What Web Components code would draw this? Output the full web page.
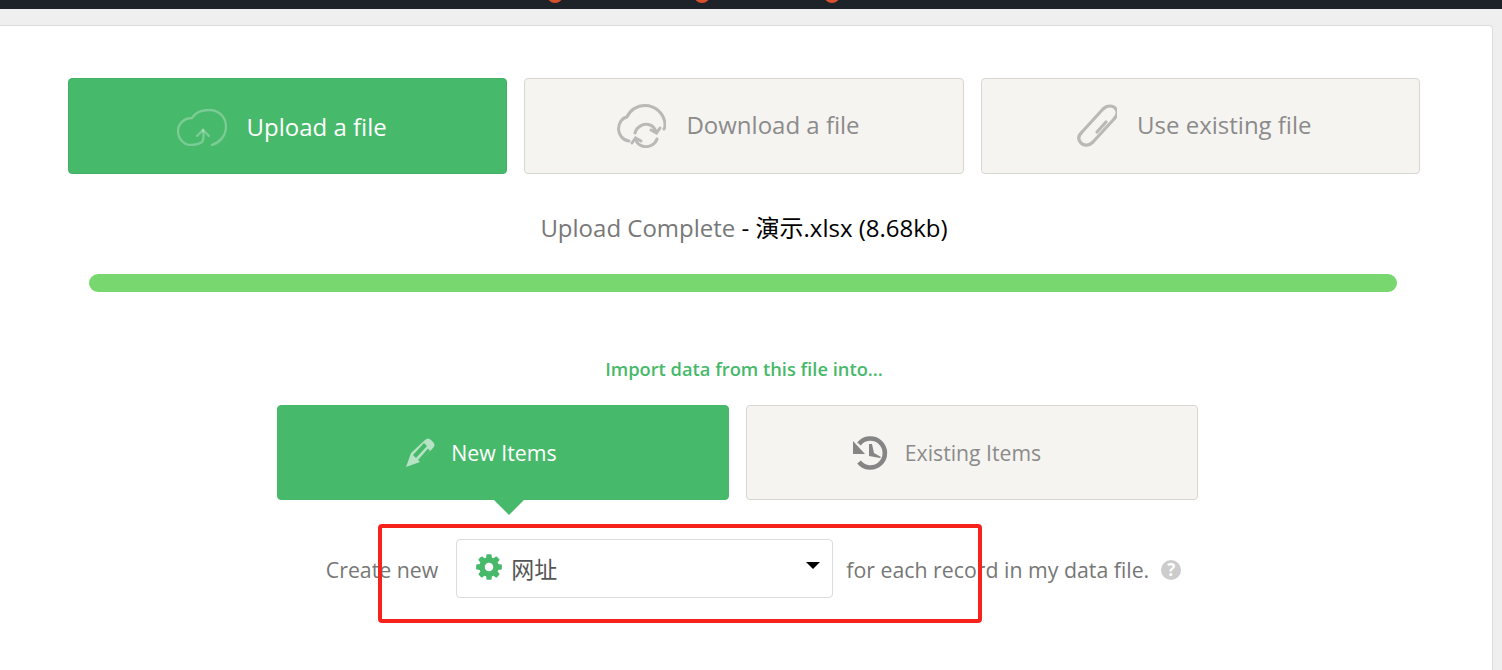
<!DOCTYPE html>
<html>
<head>
<meta charset="utf-8">
<style>
html, body { margin: 0; height: 100%; overflow: hidden; }
body { background: #efefef; font-family: "Open Sans", "Noto Sans CJK SC", sans-serif; }
</style>
</head>
<body>
<top-bar></top-bar>
<import-card>
  <div slot="tabs">
    <source-tab active label="Upload a file"><svg slot="icon" width="50" height="37" viewBox="0 0 50 37" fill="none" stroke="#fff" stroke-opacity=".28" stroke-width="2.4" stroke-linecap="round"><path d="M35 36C42 34 49 27 49 18C49 8 42 1 32 1C24 1 18 4 15 9C7 9 1 15 1 22C1 30 7 36 14 36C18 36 22 35 25 33C27 31 27 28 26 21"/><path d="M20 27L26 21L32 27"/></svg></source-tab>
    <source-tab label="Download a file"><svg slot="icon" width="50" height="44" viewBox="-1 0 50 44" fill="none" stroke="#b9b9b7" stroke-width="3" stroke-linecap="round"><path d="M12 37C5 36 1.500 30 1.500 25C1.500 19 5 14 10 13C13 6 20 1.500 28 1.500C38 1.500 47 9 48 20C48 22 48 24 47 25"/><path d="M18 29C20 22 27 19 33 21C36 22 38 25 39 28"/><path d="M43 24L39.500 29L34 26"/><path d="M40 35C38 41 31 44 25 42C22 41 20 39 19 36"/><path d="M15 39L18.500 34L24 37"/></svg></source-tab>
    <source-tab label="Use existing file"><svg slot="icon" width="40" height="44" viewBox="-1 0 40 44" fill="none" stroke="#b9b9b7" stroke-width="3.200" stroke-linecap="round"><path d="M4 28L25 5C29 1 35 1 38 5C40 8 39 12 36 15L15 38C11 42 6 42 3 39C0 36 0 32 4 28Z"/><path d="M19 28L28 18"/></svg></source-tab>
  </div>
  <upload-status slot="status" size="(8.68kb)">演示.xlsx</upload-status>
  <progress-line slot="progress"></progress-line>
  <div slot="heading">Import data from this file into...</div>
  <div slot="kinds">
    <kind-tab active label="New Items"><svg slot="icon" width="30" height="30" viewBox="0 0 30 30"><path fill="#fff" fill-opacity=".6" fill-rule="evenodd" d="M1 29L6 15L20 2C22 0 24 0 26 2L28 4C30 6 30 8 28 10L15 24ZM8 17L11 20L22 8L19 5ZM13 22L15 24L25 13L23 10.500Z"/></svg></kind-tab>
    <kind-tab label="Existing Items"><svg slot="icon" width="36" height="34" viewBox="0 0 36 34"><path fill="none" stroke="#858585" stroke-width="4.600" d="M6 8A14.500 14.500 0 1 1 6 26"/><path fill="#858585" d="M0 5L12 18H0Z"/><path fill="#858585" d="M16 8H19L21 17L28 21L27 22L16 20Z"/></svg></kind-tab>
  </div>
  <create-row slot="row" value="网址"></create-row>
</import-card>
<script>
// top dark strip, only the bottom of the header is visible
class TopBar extends HTMLElement {
  constructor() {
    super();
    this.attachShadow({mode: 'open'});
    this.shadowRoot.innerHTML = `
    <style>
      :host { display: block; height: 9px; background: #1e2329; position: relative; overflow: hidden; }
      i { position: absolute; top: -13px; width: 16px; height: 16px; border-radius: 50%; background: #d9512c; }
    </style>
    <i style="left:547px"></i><i style="left:694px"></i><i style="left:824px"></i>`;
  }
}
customElements.define('top-bar', TopBar);

class ImportCard extends HTMLElement {
  constructor() {
    super();
    this.attachShadow({mode: 'open'});
    this.shadowRoot.innerHTML = `
    <style>
      :host { display: block; position: relative; box-sizing: border-box; width: 1493px; height: 660px; margin-top: 16px;
        background: #fff; border: 1px solid #dcdcdc; border-left: 0; border-bottom: 0; border-top-right-radius: 4px; padding: 52px 72px 0 68px; }
      ::slotted([slot=tabs]) { display: flex; gap: 17px; }
      ::slotted([slot=heading]) { margin-top: 65px; text-align: center; color: #47b96b; font-size: 18.300px; font-weight: 600; line-height: 24px; }
      ::slotted([slot=kinds]) { display: flex; justify-content: center; gap: 17px; margin-top: 24px; padding-right: 13px; }
      .mark { position: absolute; left: 378px; top: 498px; width: 604px; height: 99px; box-sizing: border-box;
        border: 4px solid #f5231c; border-radius: 4px; pointer-events: none; }
    </style>
    <slot name="tabs"></slot>
    <slot name="status"></slot>
    <slot name="progress"></slot>
    <slot name="heading"></slot>
    <slot name="kinds"></slot>
    <slot name="row"></slot>
    <div class="mark"></div>`;
  }
}
customElements.define('import-card', ImportCard);

class SourceTab extends HTMLElement {
  constructor() {
    super();
    this.attachShadow({mode: 'open'});
    this.shadowRoot.innerHTML = `
    <style>
      :host { flex: 1; box-sizing: border-box; height: 96px; display: flex; align-items: center; justify-content: center; gap: 20px; padding-right: 12px;
        background: #f6f4f1; border: 1px solid #d9d6d0; border-radius: 4px; color: #8b8b8b; font-size: 24px; }
      :host([active]) { background: #47b96b; border-color: #43b067; color: #fff; padding-top: 2px; }
      span { position: relative; top: -2px; }
      :host([active]) span { top: -1px; }
      ::slotted(svg) { display: block; }
    </style>
    <slot name="icon"></slot><span></span>`;
    this.shadowRoot.querySelector('span').innerText = this.getAttribute('label');
  }
}
customElements.define('source-tab', SourceTab);

class UploadStatus extends HTMLElement {
  constructor() {
    super();
    this.attachShadow({mode: 'open'});
    this.shadowRoot.innerHTML = `
    <style>
      :host { display: block; margin-top: 38px; text-align: center; font-size: 24px; line-height: 32px; color: #000; }
      em { font-style: normal; color: #787878; }
    </style>
    <em>Upload Complete</em> - <slot></slot> <span></span>`;
    this.shadowRoot.querySelector('span').innerText = this.getAttribute('size');
  }
}
customElements.define('upload-status', UploadStatus);

class ProgressLine extends HTMLElement {
  constructor() {
    super();
    this.attachShadow({mode: 'open'});
    this.shadowRoot.innerHTML = `
    <style>
      :host { display: block; height: 18px; margin: 30px 23px 0 21px; border-radius: 9px; background: #78d86f; }
    </style>`;
  }
}
customElements.define('progress-line', ProgressLine);

class KindTab extends HTMLElement {
  constructor() {
    super();
    this.attachShadow({mode: 'open'});
    this.shadowRoot.innerHTML = `
    <style>
      :host { position: relative; box-sizing: border-box; width: 452px; height: 95px; display: flex; align-items: center; justify-content: center; gap: 16px; padding-right: 50px;
        background: #f6f4f1; border: 1px solid #d9d6d0; border-radius: 4px; color: #8b8b8b; font-size: 21.200px; }
      :host([active]) { background: #47b96b; border-color: #47b96b; color: #fff; padding-right: 44px; font-size: 21.300px; }
      :host([active])::after { content: ""; position: absolute; left: 216px; top: 94px; border: 15px solid transparent; border-top-color: #47b96b; border-bottom: 0; }
      ::slotted(svg) { display: block; }
    </style>
    <slot name="icon"></slot><span></span>`;
    this.shadowRoot.querySelector('span').innerText = this.getAttribute('label');
  }
}
customElements.define('kind-tab', KindTab);

class CreateRow extends HTMLElement {
  constructor() {
    super();
    this.attachShadow({mode: 'open'});
    this.shadowRoot.innerHTML = `
    <style>
      :host { display: flex; align-items: center; justify-content: center; gap: 13px; margin-top: 39px; height: 59px; padding-left: 19px; color: #777; font-size: 21.300px; }
      .lead { margin-right: 5px; }
      .txt { position: relative; top: 1px; }
      .select { box-sizing: border-box; width: 377px; height: 59px; display: flex; align-items: center; gap: 7px; padding: 0 12px 0 17px;
        border: 1px solid #dcdcdc; border-radius: 4px; background: #fff; color: #555; font-size: 23px; }
      .val { flex: 1; position: relative; top: -1px; }
      .caret { width: 0; height: 0; border: 7px solid transparent; border-top-color: #000; border-bottom: 0; margin-top: -6px; }
      .help { width: 20px; height: 20px; border-radius: 50%; background: #ccc; color: #fff; font-size: 17px; font-weight: 700; line-height: 20px; text-align: center; margin-left: -1px; position: relative; top: 1px; }
      svg { display: block; margin-top: -4px; }
    </style>
    <span class="txt lead">Create new</span>
    <div class="select">
      <svg width="30" height="30" viewBox="0 0 1792 1792"><path fill="#47b96b" fill-rule="evenodd" d="M1152 896q0-106-75-181t-181-75-181 75-75 181 75 181 181 75 181-75 75-181zm512-109v222q0 12-8 23t-20 13l-185 28q-19 54-39 91 35 50 107 138 10 12 10 25t-9 23q-27 37-99 108t-94 71q-12 0-26-9l-138-108q-44 23-91 38-16 136-29 186-7 28-36 28h-222q-14 0-24.500-8.500t-11.500-21.500l-28-184q-49-16-90-37l-141 107q-10 9-25 9-14 0-25-11-126-114-165-168-7-10-7-23 0-12 8-23 15-21 51-66.500t54-70.500q-27-50-41-99l-183-27q-13-2-21-12.500t-8-23.500v-222q0-12 8-23t19-13l186-28q14-46 39-92-40-57-107-138-10-12-10-24 0-10 9-23 26-36 98.500-107.500t94.500-71.500q13 0 26 10l138 107q44-23 91-38 16-136 29-186 7-28 36-28h222q14 0 24.500 8.500t11.500 21.500l28 184q49 16 90 37l142-107q9-9 24-9 13 0 25 10 129 119 165 170 7 8 7 22 0 12-8 23-15 21-51 66.500t-54 70.500q26 50 41 98l183 28q13 2 21 12.500t8 23.500z"/></svg>
      <span class="val"></span>
      <i class="caret"></i>
    </div>
    <span class="txt">for each record in my data file.</span>
    <div class="help">?</div>`;
    this.shadowRoot.querySelector('.val').innerText = this.getAttribute('value');
  }
}
customElements.define('create-row', CreateRow);
</script>
</body>
</html>
